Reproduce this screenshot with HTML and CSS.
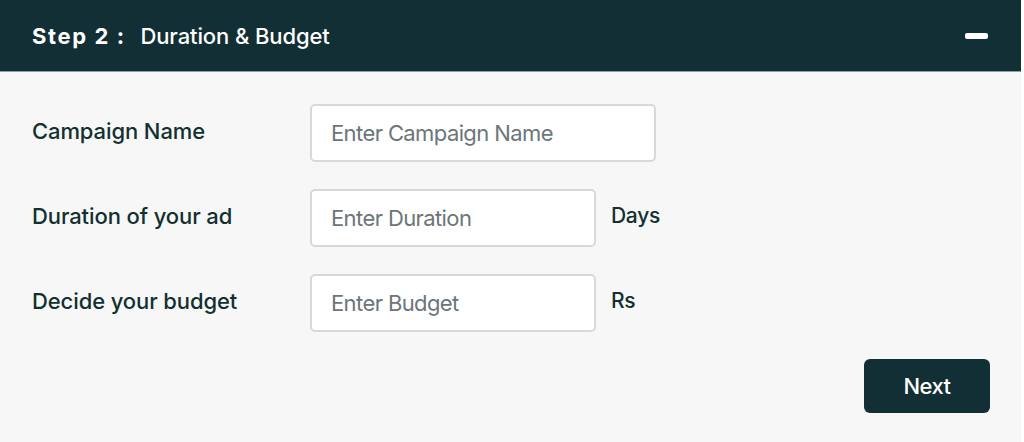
FILE: index.html
```html
<!DOCTYPE html>
<html lang="en">
<head>
    <meta charset="UTF-8">
    <meta name="viewport" content="width=device-width, initial-scale=1.0">
    <title>Step 2 - Duration &amp; Budget</title>
    <link rel="stylesheet" href="styles.css">
</head>
<body>
    <div class="panel">
        <div class="panel-header">
            <h2 class="panel-title"><span class="step">Step 2 :</span> Duration &amp; Budget</h2>
            <span class="collapse"></span>
        </div>

        <form class="panel-body">
            <div class="row">
                <label for="name">Campaign Name</label>
                <input type="text" id="name" class="wide" placeholder="Enter Campaign Name">
            </div>
            <div class="row">
                <label for="duration">Duration of your ad</label>
                <input type="text" id="duration" placeholder="Enter Duration">
                <span class="unit">Days</span>
            </div>
            <div class="row">
                <label for="budget">Decide your budget</label>
                <input type="text" id="budget" placeholder="Enter Budget">
                <span class="unit">Rs</span>
            </div>
            <div class="actions">
                <button type="button">Next</button>
            </div>
        </form>
    </div>
</body>
</html>
```

FILE: styles.css
```css
body {
    margin: 0;
    background-color: #ffffff;
    font-family: Inter, "Noto Sans", sans-serif;
    color: #12302f;
}

.panel {
    width: 1021px;
    background-color: #f7f7f7;
}

.panel-header {
    height: 71px;
    background-color: #112f34;
    border-bottom: 1px solid #8fa1a3;
    display: flex;
    align-items: center;
    justify-content: space-between;
    padding: 0 32px;
}

.panel-title {
    margin: 0;
    color: #ffffff;
    font-size: 22px;
    font-weight: 500;
    letter-spacing: -0.1px;
}

.step {
    font-weight: 700;
    letter-spacing: 1.6px;
    margin-right: 9px;
}

.collapse {
    width: 23px;
    height: 6px;
    background-color: #ffffff;
    border-radius: 2px;
    margin-right: 1px;
}

.panel-body {
    padding: 32px 31px 29px 32px;
}

.row {
    display: flex;
    align-items: center;
    margin-bottom: 27px;
}

.row label {
    width: 278px;
    font-size: 22px;
    font-weight: 500;
    letter-spacing: -0.1px;
    margin-top: -5px;
}

.row input {
    box-sizing: border-box;
    width: 286px;
    height: 58px;
    padding: 0 19px;
    border: 2px solid #d5d9dc;
    border-radius: 5px;
    background-color: #ffffff;
    font-family: Inter, "Noto Sans", sans-serif;
    font-size: 22px;
    letter-spacing: -0.6px;
    color: #12302f;
}

.row input.wide {
    width: 346px;
}

.row input::placeholder {
    color: #6c757a;
}

.unit {
    margin-left: 15px;
    font-size: 21px;
    font-weight: 500;
    letter-spacing: -0.3px;
    margin-top: -5px;
}

.actions {
    display: flex;
    justify-content: flex-end;
}

button {
    width: 126px;
    height: 54px;
    border: none;
    border-radius: 6px;
    background-color: #112f34;
    color: #ffffff;
    font-family: Inter, "Noto Sans", sans-serif;
    font-size: 22px;
    font-weight: 500;
    letter-spacing: -0.5px;
    cursor: pointer;
}
```
